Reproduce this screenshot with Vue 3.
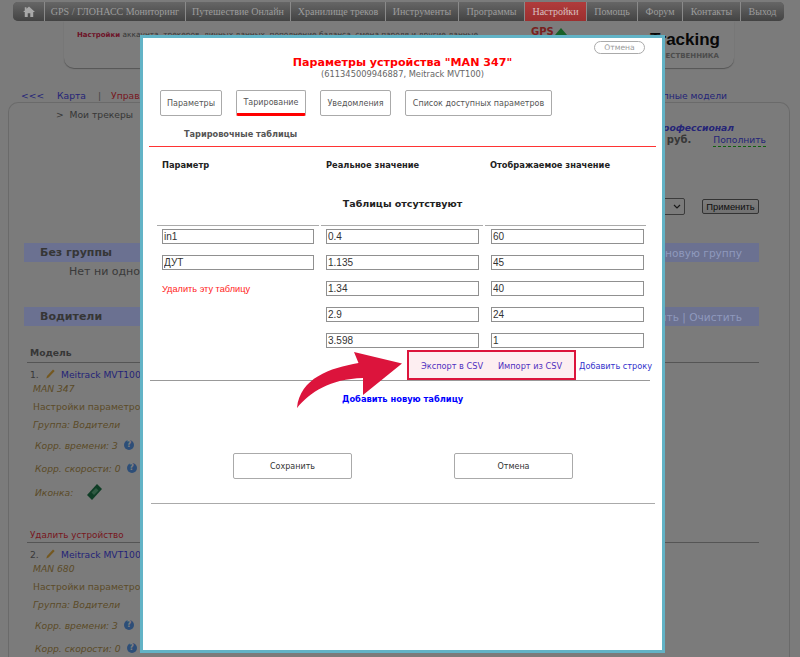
<template>
  <div class="page">
    <nav class="nav">
      <a
        v-for="item in navItems"
        :key="item.label"
        class="nav-item"
        :class="{ active: item.active }"
        :style="{ width: item.width + 'px' }"
      >
        <svg v-if="item.home" width="12" height="11" viewBox="0 0 14 13">
          <path d="M7 0.5 L14 7 H12 V13 H8.5 V8.5 H5.5 V13 H2 V7 H0 L2 5.2 V1.5 H4 V3.3 Z" fill="#a8a8a8" />
        </svg>
        <template v-else>{{ item.label }}</template>
      </a>
    </nav>

    <header class="head">
      <p class="head-text"><b>Настройки</b> аккаунта, трекеров, личных данных, пополнение баланса, смена пароля и другие данные</p>
      <div class="logo">
        <div class="logo-top">
          <span class="logo-gps">GPS</span>
          <span class="logo-tri"></span>
          <span class="logo-name">Tracking</span>
        </div>
        <div class="logo-sub">ПУТЕШЕСТВЕННИКА</div>
      </div>
    </header>

    <div class="crumbs">
      <a class="back">&lt;&lt;&lt;</a>
      <a class="crumb-link">Карта</a>
      <span class="sep">|</span>
      <a class="crumb-red">Управление</a>
      <a class="crumb-link models">Доступные модели</a>
    </div>

    <main class="panel">
      <div class="trail">&gt;&nbsp; Мои трекеры</div>
      <div class="tariff">
        <div class="tariff-name">Профессионал</div>
        <div class="tariff-money">
          <span>руб.</span>
          <a class="topup">Пополнить</a>
        </div>
      </div>
      <div class="apply-row">
        <span class="select"><svg width="8" height="5" viewBox="0 0 8 5"><path d="M1 1 L4 4 L7 1" fill="none" stroke="#333" stroke-width="1.2" /></svg></span>
        <button class="apply">Применить</button>
      </div>
      <div class="group-bar first">
        <span>Без группы</span>
        <span class="bar-action">новую группу</span>
      </div>
      <div class="empty">Нет ни одного устройства</div>
      <div class="group-bar second">
        <span>Водители</span>
        <span class="bar-action">Удалить | Очистить</span>
      </div>
      <div class="model-head">Модель</div>
      <section v-for="(dev, i) in devices" :key="dev.name" class="device">
        <div class="device-title">
          <span class="num">{{ i + 1 }}.</span>
          <svg class="pencil" width="9" height="10" viewBox="0 0 9 10">
            <path d="M7 0.5 L8.7 2 L2.6 8.4 L0.3 9.6 L1 7 Z" fill="#e8b040" />
          </svg>
          <a class="dev-model">Meitrack MVT100</a>
        </div>
        <div class="dev-name">{{ dev.name }}</div>
        <div class="dev-settings">Настройки параметров</div>
        <div class="dev-group">Группа: Водители</div>
        <div class="dev-corr">Корр. времени: 3 <i class="info">?</i></div>
        <div class="dev-corr speed">Корр. скорости: 0 <i class="info">?</i></div>
        <template v-if="i === 0">
          <div class="dev-icon">
            Иконка:
            <svg width="17" height="18" viewBox="0 0 17 18">
              <path d="M11 1 L16 6 L6 17 L1 12 Z" fill="#1f7a4c" />
              <path d="M10 5 L12.5 7.5 L8 12 L5.5 9.5 Z" fill="#5fb585" />
            </svg>
          </div>
          <div class="dev-del">Удалить устройство</div>
        </template>
      </section>
    </main>

    <div class="overlay"></div>

    <div class="modal">
      <a class="pill">Отмена</a>
      <h1 class="title">Параметры устройства "MAN 347"</h1>
      <div class="subtitle">(611345009946887, Meitrack MVT100)</div>

      <div class="tabs">
        <a v-for="tab in tabs" :key="tab.label" class="tab" :class="{ current: tab.current }" :style="{ width: tab.width + 'px' }">{{ tab.label }}</a>
      </div>

      <div class="section-name">Тарировочные таблицы</div>

      <div class="col-heads">
        <span>Параметр</span>
        <span>Реальное значение</span>
        <span>Отображаемое значение</span>
      </div>

      <div class="none">Таблицы отсутствуют</div>

      <div class="rules"><i></i><i></i><i></i></div>

      <div class="grid">
        <template v-for="row in rows" :key="row.real">
          <div class="cell-left">
            <input v-if="row.param" class="field" :value="row.param" />
            <a v-else-if="row.remove" class="remove">Удалить эту таблицу</a>
          </div>
          <input class="field" :value="row.real" />
          <input class="field" :value="row.shown" />
        </template>
      </div>

      <div class="csv-row">
        <div class="csv-box">
          <a>Экспорт в CSV</a>
          <a>Импорт из CSV</a>
        </div>
        <a class="add-row">Добавить строку</a>
      </div>

      <a class="add-table">Добавить новую таблицу</a>

      <div class="actions">
        <button class="action">Сохранить</button>
        <button class="action">Отмена</button>
      </div>
      <div class="bottom-rule"></div>

      <svg class="arrow" width="108" height="60" viewBox="296 350 108 60">
        <path d="M402 363.5 L354 352 L358.5 363 C330 368 300 378 297 408 C310 392 330 379 363 378 L363 395 Z" fill="#dc143c" />
      </svg>
    </div>
  </div>
</template>

<script setup>
const navItems = [
  { label: 'home', width: 32, home: true },
  { label: 'GPS / ГЛОНАСС Мониторинг', width: 141 },
  { label: 'Путешествие Онлайн', width: 105 },
  { label: 'Хранилище треков', width: 95 },
  { label: 'Инструменты', width: 73 },
  { label: 'Программы', width: 66 },
  { label: 'Настройки', width: 62, active: true },
  { label: 'Помощь', width: 51 },
  { label: 'Форум', width: 45 },
  { label: 'Контакты', width: 58 },
  { label: 'Выход', width: 43 },
]

const devices = [{ name: 'MAN 347' }, { name: 'MAN 680' }]

const tabs = [
  { label: 'Параметры', width: 62 },
  { label: 'Тарирование', width: 70, current: true },
  { label: 'Уведомления', width: 71 },
  { label: 'Список доступных параметров', width: 147 },
]

const rows = [
  { param: 'in1', real: '0.4', shown: '60' },
  { param: 'ДУТ', real: '1.135', shown: '45' },
  { remove: true, real: '1.34', shown: '40' },
  { real: '2.9', shown: '24' },
  { real: '3.598', shown: '1' },
]
</script>

<style>
html,
body {
  margin: 0;
  overflow: hidden;
}
</style>

<style scoped>
.page {
  position: relative;
  width: 800px;
  height: 657px;
  overflow: hidden;
  background: #f6f6f6;
  font-family: "DejaVu Sans", Verdana, sans-serif;
  font-size: 9.2px;
  color: #6e6e6e;
}
.nav {
  position: relative;
  z-index: 2;
  display: flex;
  height: 19px;
  margin: 2px 0 0 13px;
  width: 771px;
  border-radius: 5px;
  overflow: hidden;
  background: #555;
}
.nav-item {
  display: flex;
  align-items: center;
  justify-content: center;
  height: 19px;
  box-sizing: border-box;
  flex: none;
  border-right: 1px solid #8a8a8a;
  background: linear-gradient(#666, #434343);
  font-family: "Liberation Serif", serif;
  font-size: 10px;
  color: #9c9c9c;
  white-space: nowrap;
}
.nav-item:last-child {
  border-right: 0;
}
.nav-item.active {
  background: linear-gradient(#b03c3c, #9c2f2f);
  color: #d8c0c0;
}
.head {
  display: flex;
  justify-content: space-between;
  width: 670px;
  height: 47px;
  margin-left: 64px;
  box-sizing: border-box;
  padding: 0 14px 0 13px;
  background: #f8f8f8;
  border-radius: 0 0 10px 10px;
  box-shadow: 0 1px 1px #aaa;
}
.head-text {
  margin: 9px 0 0;
  width: 420px;
  font-size: 7.4px;
  color: #707070;
  white-space: nowrap;
  overflow: hidden;
}
.head-text b {
  font-size: 7px;
  color: #dc2850;
}
.logo {
  width: 189px;
  margin-top: 5px;
}
.logo-top {
  display: flex;
  align-items: flex-start;
  height: 25px;
}
.logo-gps {
  font-size: 10px;
  font-weight: bold;
  color: #f04040;
}
.logo-tri {
  width: 0;
  height: 0;
  margin: 2px 0 0 1px;
  border-left: 6px solid transparent;
  border-right: 6px solid transparent;
  border-bottom: 7px solid #30c050;
}
.logo-name {
  margin-left: auto;
  margin-top: 3px;
  font-family: "Liberation Sans", sans-serif;
  font-size: 17px;
  line-height: 22px;
  font-weight: bold;
  color: #111;
}
.logo-sub {
  margin-top: 1px;
  padding-right: 1px;
  text-align: right;
  font-size: 7px;
  font-weight: bold;
  color: #999;
}
.crumbs {
  display: flex;
  height: 12px;
  margin-top: 22px;
  padding-left: 21px;
  padding-right: 73px;
  line-height: 12px;
  white-space: nowrap;
}
.back {
  width: 36px;
  color: #4a4af0;
}
.crumb-link {
  color: #4a4af0;
}
.sep {
  margin-left: 12px;
  color: #8a8a8a;
}
.crumb-red {
  margin-left: 10px;
  color: #f03040;
}
.models {
  margin-left: auto;
}
.panel {
  height: 555px;
  margin: 0 10px 0 8px;
  box-sizing: border-box;
  padding: 6px 30px 0 15px;
  border: 1px solid #d4d4d4;
  border-bottom: 0;
  border-radius: 10px 10px 0 0;
}
.trail {
  padding-left: 32px;
  line-height: 12px;
}
.tariff {
  height: 26px;
  margin-top: 1px;
}
.tariff-name {
  text-align: right;
  padding-right: 25px;
  line-height: 12px;
  font-weight: bold;
  font-style: italic;
  color: #4a4af0;
}
.tariff-money {
  display: flex;
  justify-content: flex-end;
  gap: 22px;
  margin-right: -7px;
  line-height: 12px;
}
.tariff-money span {
  font-size: 10px;
  font-weight: bold;
}
.topup {
  color: #4a4af0;
  border-bottom: 1px dashed #20c020;
}
.apply-row {
  display: flex;
  justify-content: flex-end;
  align-items: center;
  height: 17px;
  margin-top: 50px;
}
.select {
  display: flex;
  align-items: center;
  justify-content: flex-end;
  width: 120px;
  height: 17px;
  box-sizing: border-box;
  padding-right: 3px;
  margin-right: 17px;
  border: 1px solid #777;
  border-radius: 2px;
}
.apply {
  width: 57px;
  height: 15px;
  padding: 0;
  border: 1px solid #666;
  border-radius: 2px;
  background: linear-gradient(#fafafa, #e4e4e4);
  font-family: "Liberation Sans", sans-serif;
  font-size: 9.4px;
  color: #222;
}
.group-bar {
  position: relative;
  z-index: 2;
  display: flex;
  justify-content: space-between;
  align-items: center;
  height: 19px;
  padding: 0 17px 0 16px;
  background: #6b7191;
  font-size: 11px;
  font-weight: bold;
  color: #363636;
}
.group-bar.first {
  margin-top: 28px;
}
.group-bar.second {
  margin-top: 25px;
}
.bar-action {
  font-size: 10.6px;
  font-weight: normal;
  color: #8f99bd;
}
.empty {
  padding-left: 45px;
  line-height: 20px;
  font-size: 11px;
  color: #747474;
}
.model-head {
  height: 16px;
  margin: 20px 0 0 3px;
  padding-left: 3px;
  line-height: 14px;
  font-weight: bold;
  border-bottom: 1px solid #aaa;
}
.device {
  margin-left: 3px;
  padding-left: 3px;
  color: #b89650;
}
.device-title {
  display: flex;
  align-items: center;
  height: 16px;
  margin-top: 3px;
  color: #707070;
}
.num {
  width: 16px;
}
.pencil {
  margin-right: 6px;
}
.dev-model {
  color: #4a4af0;
}
.dev-name,
.dev-group {
  font-style: italic;
  line-height: 14px;
}
.dev-name {
  margin-left: 3px;
}
.dev-settings {
  margin-top: 4px;
  margin-left: 3px;
  line-height: 14px;
}
.dev-group {
  margin-top: 4px;
  margin-left: 3px;
}
.dev-corr {
  display: flex;
  align-items: center;
  gap: 6px;
  margin-top: 6px;
  margin-left: 5px;
  height: 14px;
  font-style: italic;
}
.dev-corr.speed {
  margin-top: 9px;
}
.info {
  display: inline-block;
  width: 10px;
  height: 10px;
  border-radius: 50%;
  background: #5a9cf0;
  text-align: center;
  line-height: 10px;
  font-size: 8px;
  font-weight: bold;
  font-style: normal;
  color: #fff;
}
.dev-icon {
  display: flex;
  align-items: center;
  gap: 13px;
  height: 18px;
  margin-top: 8px;
  margin-left: 5px;
  font-style: italic;
}
.dev-del {
  height: 14px;
  margin-top: 27px;
  line-height: 14px;
  font-size: 8.8px;
  color: #f03040;
}
.device:last-child {
  border-top: 1px solid #aaa;
}
.overlay {
  position: absolute;
  inset: 0;
  background: rgba(0, 0, 0, 0.5);
}
.modal {
  position: absolute;
  z-index: 3;
  left: 140px;
  top: 35px;
  width: 525px;
  height: 618px;
  box-sizing: border-box;
  border: 3px solid #62b3c6;
  background: #fff;
  font-family: "DejaVu Sans", sans-serif;
}
.pill {
  position: absolute;
  left: 451px;
  top: 3px;
  width: 51px;
  height: 13px;
  box-sizing: border-box;
  border: 1px solid #aaa;
  border-radius: 7px;
  text-align: center;
  line-height: 11px;
  font-size: 7.6px;
  color: #999;
}
.title {
  margin: 18px 0 0;
  text-align: center;
  line-height: 14px;
  font-size: 11.1px;
  font-weight: bold;
  color: #f00;
}
.subtitle {
  margin-top: -1px;
  text-align: center;
  line-height: 11px;
  font-size: 8.3px;
  color: #666;
}
.tabs {
  display: flex;
  gap: 14px;
  margin: 10px 0 0 17px;
}
.tab {
  display: flex;
  align-items: center;
  justify-content: center;
  height: 26px;
  box-sizing: border-box;
  border: 1px solid #aaa;
  border-radius: 2px;
  font-size: 8px;
  color: #555;
  white-space: nowrap;
}
.tab.current {
  border-bottom: 3px solid #f00;
}
.section-name {
  margin: 12px 0 0 41px;
  line-height: 12px;
  font-size: 8.2px;
  font-weight: bold;
  color: #555;
}
.col-heads {
  display: grid;
  grid-template-columns: 164px 164px auto;
  margin: 6px 0 0 6px;
  padding: 12px 0 0 13px;
  width: 507px;
  box-sizing: border-box;
  border-top: 1px solid #f33;
  line-height: 12px;
  font-size: 8.3px;
  font-weight: bold;
  color: #222;
}
.none {
  margin-top: 26px;
  text-align: center;
  line-height: 13px;
  font-size: 9.5px;
  font-weight: bold;
  color: #222;
}
.rules {
  display: grid;
  grid-template-columns: 162px 162px 161px;
  gap: 2px;
  margin: 15px 0 0 14px;
  width: 491px;
}
.rules i {
  height: 1px;
  background: #aaa;
}
.grid {
  display: grid;
  grid-template-columns: 152px 153px 153px;
  column-gap: 12px;
  row-gap: 11px;
  grid-auto-rows: 15px;
  margin: 3px 0 0 19px;
  width: 482px;
}
.cell-left {
  display: flex;
  align-items: center;
}
.field {
  width: 100%;
  height: 15px;
  box-sizing: border-box;
  padding: 0 1px;
  border: 1px solid #909090;
  border-radius: 0;
  font-family: "Liberation Sans", sans-serif;
  font-size: 10px;
  color: #333;
  outline: none;
}
.remove {
  font-family: "Liberation Sans", sans-serif;
  font-size: 9.2px;
  color: #f22;
}
.csv-row {
  display: flex;
  align-items: center;
  height: 30px;
  margin: 2px 0 0 7px;
  width: 500px;
  border-bottom: 1px solid #999;
  font-size: 8.2px;
  color: #33c;
  white-space: nowrap;
}
.csv-box {
  display: flex;
  flex: none;
  align-items: center;
  justify-content: space-between;
  width: 169px;
  height: 30px;
  margin-left: 257px;
  box-sizing: border-box;
  padding: 2px 12px 0 12px;
  border: 2px solid #dc143c;
  background: #fdeef1;
  color: #5030c0;
}
.add-row {
  margin-left: 3px;
  padding-top: 2px;
}
.add-table {
  display: block;
  margin: 12px 0 0 199px;
  line-height: 12px;
  font-size: 8.3px;
  font-weight: bold;
  color: #00f;
}
.actions {
  display: flex;
  gap: 102px;
  margin: 48px 0 0 90px;
}
.action {
  width: 119px;
  height: 26px;
  padding: 0;
  border: 1px solid #aaa;
  border-radius: 2px;
  background: #fff;
  font-family: "DejaVu Sans", sans-serif;
  font-size: 8px;
  color: #333;
}
.bottom-rule {
  height: 1px;
  margin: 24px 7px 0 8px;
  background: #aaa;
}
.arrow {
  position: absolute;
  left: 153px;
  top: 312px;
}
</style>
